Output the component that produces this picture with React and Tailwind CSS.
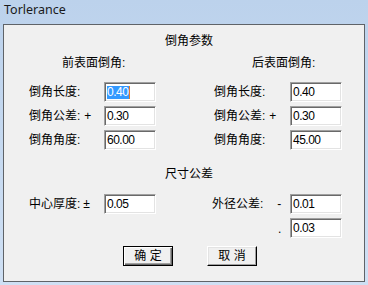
const FONT = "font-['Liberation_Sans','Noto_Sans_CJK_SC',sans-serif]";

function Field({ value, selected }) {
  return (
    <div className="w-[52px] h-[20px] bg-white border border-t-[#a0a0a0] border-l-[#a0a0a0] border-r-white border-b-white shadow-[inset_1px_1px_0_#696969,inset_-1px_-1px_0_#e3e3e3] flex items-center pl-[2px]">
      {selected ? (
        <span className="flex items-center h-[13px] bg-[#3399ff] text-white text-[12px] leading-[13px] tracking-[-0.5px] pr-[1px] border-r border-r-[#e07b2a]">
          {value}
        </span>
      ) : (
        <span className="text-black text-[12px] leading-[13px] tracking-[-0.5px]">{value}</span>
      )}
    </div>
  );
}

function Row({ label, suffix, suffixMl, value, selected, side }) {
  const labelCls =
    side === "left"
      ? "w-[100px] pl-[25px]"
      : "w-[102px] pl-[26px]";
  return (
    <div className="flex items-center h-[20px]">
      <div className={`${labelCls} flex items-center text-[12px] leading-[12px] text-black whitespace-pre`}>
        <span>{label}</span>
        {suffix ? <span className={suffixMl}>{suffix}</span> : null}
      </div>
      <Field value={value} selected={selected} />
    </div>
  );
}

function Button({ children, isDefault }) {
  return (
    <div
      className={`w-[50px] h-[20px] bg-[#f0f0f0] flex items-center justify-center text-[12px] leading-[12px] text-black whitespace-pre ${
        isDefault
          ? "border border-black shadow-[inset_1px_1px_0_#ffffff,inset_-1px_-1px_0_#696969,inset_-2px_-2px_0_#a0a0a0]"
          : "border border-t-white border-l-white border-r-black border-b-black shadow-[inset_-1px_-1px_0_#a0a0a0,inset_1px_1px_0_#e3e3e3]"
      }`}
    >
      {children}
    </div>
  );
}

export default function App() {
  return (
    <div className={`w-[368px] h-[285px] bg-gradient-to-b from-[#bcd2ec] to-[#cfe0f4] flex flex-col ${FONT}`}>
      <div className="h-[24px] shrink-0 flex items-start pl-[4px] pt-[2px]">
        <span className="font-['Noto_Sans',sans-serif] text-[12.5px] leading-[16px] text-[#1a1a1a]">Torlerance</span>
      </div>
      <div className="mx-[3px] h-[258px] border border-[#5f6368] bg-[#f0f0f0] flex flex-col">
        <div className="mt-[10px] pl-[161px] text-[12px] leading-[12px] text-black">倒角参数</div>
        <div className="mt-[10px] flex text-[12px] leading-[12px] text-black">
          <div className="w-[184px] pl-[58px]">前表面倒角:</div>
          <div className="pl-[64px]">后表面倒角:</div>
        </div>
        <div className="mt-[13px] flex">
          <div className="w-[184px] flex flex-col gap-[4px]">
            <Row side="left" label="倒角长度:" value="0.40" selected />
            <Row side="left" label="倒角公差:" suffix="+" suffixMl="ml-[4px]" value="0.30" />
            <Row side="left" label="倒角角度:" value="60.00" />
          </div>
          <div className="flex flex-col gap-[4px]">
            <Row side="right" label="倒角长度:" value="0.40" />
            <Row side="right" label="倒角公差:" suffix="+" suffixMl="ml-[4px]" value="0.30" />
            <Row side="right" label="倒角角度:" value="45.00" />
          </div>
        </div>
        <div className="mt-[18px] pl-[161px] text-[12px] leading-[12px] text-black">尺寸公差</div>
        <div className="mt-[14px] flex">
          <div className="w-[184px] flex flex-col">
            <Row side="left" label="中心厚度:" suffix="±" suffixMl="ml-[3px]" value="0.05" />
          </div>
          <div className="flex flex-col gap-[4px]">
            <div className="flex items-center h-[20px]">
              <div className="w-[102px] pl-[24px] flex items-center text-[12px] leading-[12px] text-black">
                <span>外径公差:</span>
                <span className="ml-[14px]">-</span>
              </div>
              <Field value="0.01" />
            </div>
            <div className="flex items-center h-[20px]">
              <div className="w-[102px] pl-[90px] flex items-end h-[20px] pb-[3px] text-[12px] leading-[12px] text-black">
                <span>.</span>
              </div>
              <Field value="0.03" />
            </div>
          </div>
        </div>
        <div className="mt-[8px] flex pl-[119px] gap-[34px]">
          <Button isDefault>确 定</Button>
          <Button>取 消</Button>
        </div>
      </div>
    </div>
  );
}
